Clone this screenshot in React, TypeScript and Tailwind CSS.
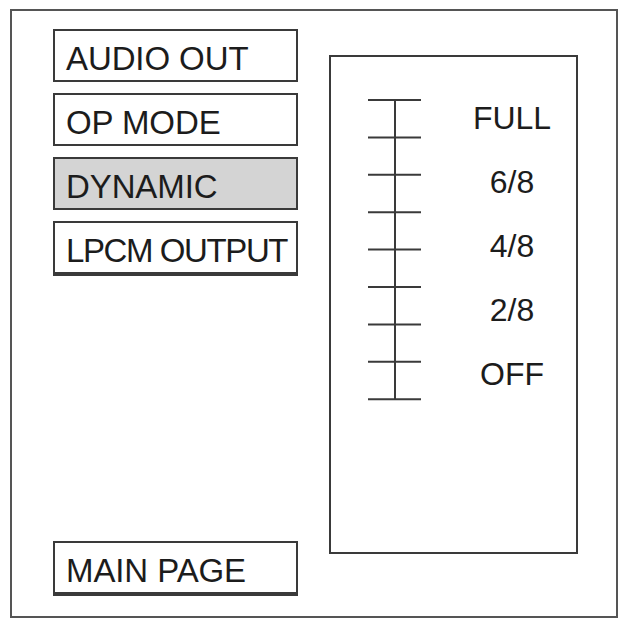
const menuItems = [
  { label: "AUDIO OUT", active: false, heavy: false, tight: false },
  { label: "OP MODE", active: false, heavy: false, tight: false },
  { label: "DYNAMIC", active: true, heavy: false, tight: false },
  { label: "LPCM OUTPUT", active: false, heavy: true, tight: true },
];

const levels = ["FULL", "6/8", "4/8", "2/8", "OFF"];

const ticks = [0, 1, 2, 3, 4, 5, 6, 7, 8];

const MenuBox = ({ label, active, heavy, tight }: { label: string; active?: boolean; heavy?: boolean; tight?: boolean }) => (
  <div
    className={`w-[245px] flex items-center pl-[11px] pt-[5px] border-2 border-[#3a3a3a] ${heavy ? "h-[55px] border-b-[4px]" : "h-[53px]"} ${active ? "bg-[#d4d4d4]" : "bg-white"} ${tight ? "tracking-[-1.4px]" : "tracking-[-0.1px]"} text-[33px] leading-none text-[#1c1c1c] whitespace-nowrap`}
  >
    {label}
  </div>
);

const App = () => {
  return (
    <div className="w-[621px] h-[620px] bg-white pt-[9px] pl-[10px] font-['Liberation_Sans',Arial,sans-serif]">
      <div className="w-[608px] h-[609px] border-2 border-[#555] flex pl-[41px] pt-[18px]">
        <div className="flex flex-col justify-between h-[567px]">
          <div className="flex flex-col gap-[11px]">
            {menuItems.map((item) => (
              <MenuBox key={item.label} label={item.label} active={item.active} heavy={item.heavy} tight={item.tight} />
            ))}
          </div>
          <MenuBox label="MAIN PAGE" heavy />
        </div>

        <div className="ml-[31px] mt-[26px] w-[249px] h-[499px] border-2 border-[#3a3a3a] flex pt-[42px]">
          <svg width="96" height="310" viewBox="0 0 96 310" className="shrink-0">
            <line x1="64" y1="1" x2="64" y2="300" stroke="#3a3a3a" strokeWidth="2" />
            {ticks.map((i) => (
              <line
                key={i}
                x1="37"
                x2="90"
                y1={1 + i * 37.4}
                y2={1 + i * 37.4}
                stroke="#3a3a3a"
                strokeWidth="2"
              />
            ))}
          </svg>
          <div className="flex flex-col items-center w-[96px] ml-[37px] pt-[3px] gap-[32px] text-[32px] leading-none text-[#1c1c1c]">
            {levels.map((lv) => (
              <div key={lv}>{lv}</div>
            ))}
          </div>
        </div>
      </div>
    </div>
  );
};

export default App;
